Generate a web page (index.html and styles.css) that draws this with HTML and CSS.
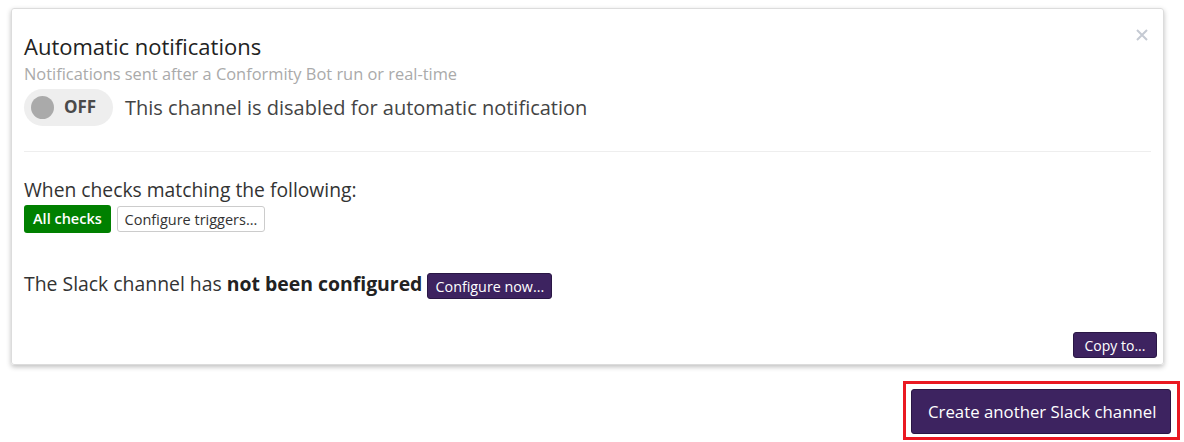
FILE: index.html
```html
<!DOCTYPE html>
<html>
<head>
<meta charset="utf-8">
<link rel="stylesheet" href="styles.css">
</head>
<body>
<div class="page">
  <div class="card">
    <button class="close" aria-label="Close">
      <svg width="12" height="12" viewBox="0 0 12 12"><path d="M1 1L11 11M11 1L1 11" stroke="#c5cad3" stroke-width="2" fill="none"/></svg>
    </button>
    <h2 class="title">Automatic notifications</h2>
    <div class="subtitle">Notifications sent after a Conformity Bot run or real-time</div>
    <div class="toggle-row">
      <div class="toggle"><span class="knob"></span><span class="toggle-label">OFF</span></div>
      <span class="toggle-text">This channel is disabled for automatic notification</span>
    </div>
    <hr class="divider">
    <div class="checks-label">When checks matching the following:</div>
    <div class="checks-row">
      <span class="badge-green">All checks</span>
      <button class="btn-outline">Configure triggers...</button>
    </div>
    <div class="config-row">
      <span>The Slack channel has <b>not been configured</b></span>
      <button class="btn-purple btn-small">Configure now...</button>
    </div>
    <div class="footer-row">
      <button class="btn-purple btn-small">Copy to...</button>
    </div>
  </div>
  <div class="actions">
    <div class="highlight">
      <button class="btn-purple btn-large">Create another Slack channel</button>
    </div>
  </div>
</div>
</body>
</html>
```
FILE: styles.css
```css
* { box-sizing: border-box; }
html, body { margin: 0; padding: 0; background: #fff; }
body { font-family: "Open Sans", sans-serif; color: #333; }
.page { padding: 8px 20px 0 11px; width: 1184px; }
.card {
  position: relative;
  width: 1153px;
  height: 357px;
  border: 1px solid #dcdcdc;
  border-radius: 3px;
  box-shadow: 0 2px 5px rgba(0,0,0,0.25);
  padding: 24px 12px 0 12px;
  display: flex;
  flex-direction: column;
}
.close {
  position: absolute;
  top: 20px; right: 15px;
  background: none; border: 0; padding: 0; cursor: pointer;
  width: 12px; height: 12px; display: block;
}
.close svg { display: block; }
.title { margin: 0; font-size: 22px; font-weight: 400; color: #222; line-height: 26px; }
.subtitle { font-size: 16.4px; color: #aaa; line-height: 19px; margin-top: 5px; }
.toggle-row { display: flex; align-items: center; margin-top: 6px; height: 37px; }
.toggle {
  display: flex; align-items: center;
  width: 89px; height: 37px; border-radius: 19px;
  background: #eee; padding-left: 7px;
}
.knob { width: 23px; height: 23px; border-radius: 50%; background: #aaa; }
.toggle-label { font-weight: 700; font-size: 17px; color: #4a4a4a; margin-left: 10px; margin-top: -3px; }
.toggle-text { font-size: 20px; color: #444; margin-left: 12px; }
.divider { border: 0; border-top: 1px solid #eee; margin: 25px 0 0 0; }
.checks-label { font-size: 19.3px; color: #333; margin-top: 26px; line-height: 24px; }
.checks-row { display: flex; align-items: center; gap: 6px; margin-top: 3px; }
.badge-green {
  background: #008000; color: #fff; font-size: 14.5px; font-weight: 600;
  border-radius: 3px; height: 28px; line-height: 28px; padding: 0 9px; width: 87px;
  white-space: nowrap;
}
.btn-outline {
  font-family: inherit; font-size: 14.5px; color: #333;
  background: #fff; border: 1px solid #ccc; border-radius: 3px;
  height: 26px; padding: 0 6px; width: 148px; white-space: nowrap;
}
.config-row { display: flex; align-items: center; margin-top: 35px; font-size: 19.4px; color: #333; }
.config-row b { font-weight: 700; color: #222; }
.config-row .btn-purple { margin-left: 5px; margin-top: 5px; }
.btn-purple {
  font-family: inherit; color: #fff; background: #3d2360;
  border: 1px solid #2a1745; border-radius: 3px; cursor: pointer; white-space: nowrap;
}
.btn-small { font-size: 14px; height: 26px; padding: 0 7px; }
.config-row .btn-small { font-size: 14.3px; width: 125px; }
.footer-row { margin-top: auto; margin-bottom: 6px; display: flex; justify-content: flex-end; }
.footer-row .btn-purple { margin-right: -6px; width: 84px; }
.actions { display: flex; justify-content: flex-end; margin-top: 16px; margin-right: -16px; }
.highlight { border: 3px solid #ea1922; padding: 5px 6px 3px 5px; }
.btn-large { font-size: 16.8px; height: 45px; padding: 0 16px; width: 260px; }
```
